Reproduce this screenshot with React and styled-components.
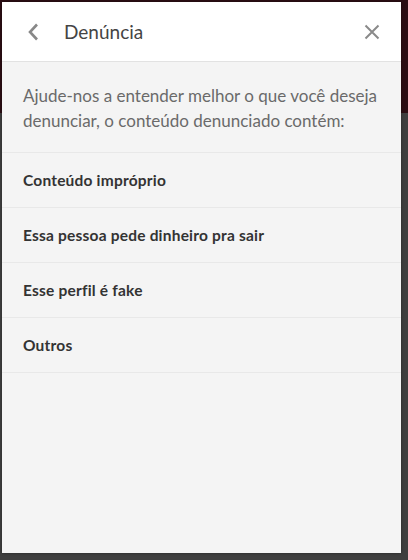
import React from 'react';
import styled, { createGlobalStyle } from 'styled-components';

const Global = createGlobalStyle`
  html, body {
    margin: 0;
    padding: 0;
    height: 100%;
  }
  body {
    background: linear-gradient(180deg, #2b0d13 0, #2b0d13 113px, #3f3f3f 113px, #3f3f3f 100%);
    font-family: Lato, "Open Sans", sans-serif;
  }
`;

const Backdrop = styled.div`
  width: 408px;
  height: 560px;
  box-sizing: border-box;
  padding: 2px 7px 7px 2px;
`;

const Modal = styled.div`
  width: 399px;
  height: 551px;
  background: #f4f4f4;
  display: flex;
  flex-direction: column;
  box-shadow: 0 0 3px rgba(0, 0, 0, 0.4);
`;

const Header = styled.div`
  height: 59px;
  background: #fff;
  border-bottom: 1px solid #e2e2e2;
  display: flex;
  align-items: center;
  padding: 0 20px 0 22px;
`;

const IconButton = styled.button`
  border: 0;
  background: none;
  padding: 0;
  width: 18px;
  height: 18px;
  display: flex;
  align-items: center;
  justify-content: center;
  cursor: pointer;
`;

const Title = styled.h2`
  flex: 1;
  margin: 0 0 0 22px;
  font-size: 19px;
  font-weight: 400;
  color: #444;
`;

const Intro = styled.p`
  margin: 0;
  padding: 21px 12px 19px 21px;
  font-size: 17px;
  line-height: 25px;
  color: #6a6a6a;
  border-bottom: 1px solid #e8e8e8;
`;

const Option = styled.div`
  height: 54px;
  display: flex;
  align-items: center;
  padding: 0 21px;
  font-size: 15.5px;
  letter-spacing: 0.2px;
  font-weight: 700;
  color: #333;
  border-bottom: 1px solid #e8e8e8;
  cursor: pointer;
`;

const options = [
  'Conteúdo impróprio',
  'Essa pessoa pede dinheiro pra sair',
  'Esse perfil é fake',
  'Outros',
];

export default function App() {
  return (
    <Backdrop>
      <Global />
      <Modal>
        <Header>
          <IconButton>
            <svg width="12" height="18" viewBox="0 0 12 18">
              <path d="M10 1.5 L3 9 L10 16.5" fill="none" stroke="#888" strokeWidth="2.6" />
            </svg>
          </IconButton>
          <Title>Denúncia</Title>
          <IconButton>
            <svg width="16" height="16" viewBox="0 0 16 16">
              <path d="M1.5 1.5 L14.5 14.5 M14.5 1.5 L1.5 14.5" fill="none" stroke="#8a8a8a" strokeWidth="2" />
            </svg>
          </IconButton>
        </Header>
        <Intro>
          Ajude-nos a entender melhor o que você deseja denunciar, o conteúdo denunciado contém:
        </Intro>
        {options.map((o) => (
          <Option key={o}>{o}</Option>
        ))}
      </Modal>
    </Backdrop>
  );
}
